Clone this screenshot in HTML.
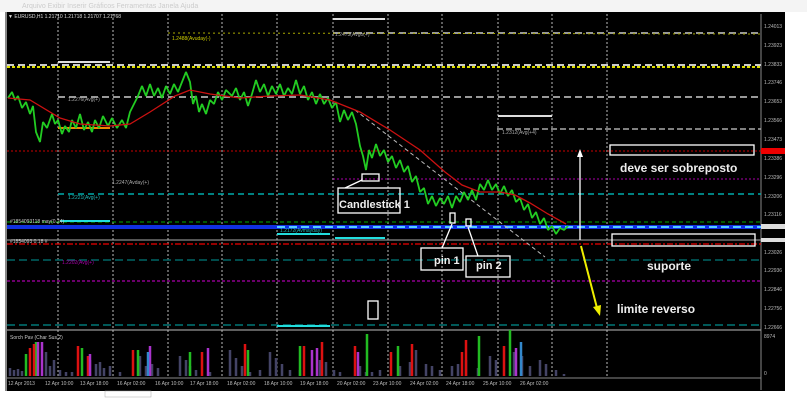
<!DOCTYPE html>
<html><head><meta charset="utf-8"><style>
body{margin:0;width:807px;height:400px;background:#fff;overflow:hidden;font-family:"Liberation Sans",sans-serif}
svg{position:absolute;left:0;top:0}
</style></head><body>
<svg width="807" height="400" viewBox="0 0 807 400" xmlns="http://www.w3.org/2000/svg" font-family="Liberation Sans, sans-serif">
<rect x="0" y="0" width="807" height="12" fill="#f4f4f4"/>
<text x="22" y="8" font-size="7" fill="#ccc">Arquivo  Exibir  Inserir  Gráficos  Ferramentas  Janela  Ajuda</text>
<rect x="5" y="12" width="780" height="380" fill="#000"/>
<rect x="5" y="12" width="2" height="380" fill="#888"/>
<line x1="761" y1="14" x2="761" y2="390" stroke="#888" stroke-width="1"/>
<g font-size="5" fill="#bbb">
<text x="764" y="28">1.24013</text><text x="764" y="47">1.23923</text><text x="764" y="66">1.23833</text><text x="764" y="84">1.23746</text><text x="764" y="103">1.23653</text><text x="764" y="122">1.23566</text><text x="764" y="141">1.23473</text><text x="764" y="160">1.23386</text><text x="764" y="179">1.23296</text><text x="764" y="198">1.23206</text><text x="764" y="216">1.23116</text><text x="764" y="254">1.23026</text><text x="764" y="272">1.22936</text><text x="764" y="291">1.22846</text><text x="764" y="310">1.22756</text><text x="764" y="329">1.22666</text><text x="764" y="338">8974</text><text x="764" y="375">0</text>
</g>
<rect x="761" y="148" width="24" height="6" fill="#e00"/>
<rect x="761" y="224" width="24" height="5" fill="#ddd"/><rect x="761" y="238" width="24" height="4" fill="#ddd"/>
<g stroke="#bbb" stroke-width="1" stroke-dasharray="2,2">
<line x1="58" y1="14" x2="58" y2="378"/><line x1="113" y1="14" x2="113" y2="378"/><line x1="168" y1="14" x2="168" y2="378"/><line x1="222" y1="14" x2="222" y2="378"/><line x1="277" y1="14" x2="277" y2="378"/><line x1="333" y1="14" x2="333" y2="378"/><line x1="388" y1="14" x2="388" y2="378"/><line x1="442" y1="14" x2="442" y2="378"/><line x1="498" y1="14" x2="498" y2="378"/><line x1="552" y1="14" x2="552" y2="378"/><line x1="607" y1="14" x2="607" y2="378"/>
</g>
<line x1="333" y1="33" x2="761" y2="33" stroke="#999" stroke-width="2" stroke-dasharray="7,4"/>
<line x1="168" y1="33" x2="761" y2="34" stroke="#aa0" stroke-width="1" stroke-dasharray="2,3"/>
<line x1="7" y1="65" x2="761" y2="65" stroke="#ccc" stroke-width="2" stroke-dasharray="7,4"/>
<line x1="7" y1="67" x2="761" y2="67" stroke="#dd0" stroke-width="2" stroke-dasharray="3,2"/>
<line x1="58" y1="97" x2="761" y2="97" stroke="#999" stroke-width="2" stroke-dasharray="7,4"/>
<line x1="497" y1="129" x2="761" y2="129" stroke="#aaa" stroke-width="1.5" stroke-dasharray="6,3"/>
<line x1="7" y1="151" x2="761" y2="151" stroke="#c00" stroke-width="1" stroke-dasharray="2,2"/>
<line x1="333" y1="179" x2="761" y2="179" stroke="#a0a" stroke-width="1" stroke-dasharray="2,2"/>
<line x1="58" y1="194" x2="761" y2="194" stroke="#0aa" stroke-width="1.5" stroke-dasharray="6,4"/>
<line x1="7" y1="222" x2="761" y2="222" stroke="#0a0" stroke-width="1" stroke-dasharray="4,3"/>
<rect x="7" y="225" width="754" height="4" fill="#1030e0"/>
<line x1="277" y1="227" x2="761" y2="227" stroke="#5cf" stroke-width="2" stroke-dasharray="8,4"/>
<line x1="7" y1="240" x2="761" y2="240" stroke="#aaa" stroke-width="1"/>
<line x1="7" y1="244" x2="761" y2="244" stroke="#e00" stroke-width="1.2" stroke-dasharray="6,2,2,2"/>
<line x1="7" y1="260" x2="761" y2="260" stroke="#066" stroke-width="1.5" stroke-dasharray="8,4"/>
<line x1="7" y1="281" x2="761" y2="281" stroke="#a0a" stroke-width="1.2" stroke-dasharray="3,2"/>
<line x1="7" y1="325" x2="761" y2="325" stroke="#077" stroke-width="1.5" stroke-dasharray="8,4"/>
<line x1="7" y1="330" x2="761" y2="330" stroke="#bbb" stroke-width="1"/>
<g stroke-width="2">
<line x1="333" y1="19" x2="385" y2="19" stroke="#ddd"/>
<line x1="58" y1="62" x2="110" y2="62" stroke="#ddd"/>
<line x1="498" y1="116" x2="552" y2="116" stroke="#ddd"/>
<line x1="60" y1="221" x2="110" y2="221" stroke="#2dd"/>
<line x1="277" y1="234" x2="330" y2="234" stroke="#2dd"/>
<line x1="335" y1="238" x2="385" y2="238" stroke="#2dd"/>
<line x1="277" y1="326" x2="330" y2="326" stroke="#2dd"/>
<line x1="58" y1="128" x2="110" y2="128" stroke="#e80"/>
</g>
<g font-size="5" fill="#cc0"><text x="172" y="40">1.2488(Avuday(-)</text><text x="335" y="36" fill="#aaa">1.2473(Avgo(+)</text></g>
<g font-size="5" fill="#aaa"><text x="68" y="101">1.2276(Avg(+)</text><text x="502" y="134">1.2312(Avg(+4)</text></g>
<text x="112" y="184" font-size="5" fill="#aaa">1.2247(Avday(+)</text>
<text x="68" y="199" font-size="5" fill="#2bb">1.2221(Avg(+)</text>
<text x="10" y="223" font-size="5" fill="#ccc">#1854093118 may(0.24)</text>
<text x="10" y="243" font-size="5" fill="#ccc">#1854093 0.18 #</text>
<text x="62" y="264" font-size="5" fill="#a0a">1.2202(Avg(+)</text>
<text x="280" y="232" font-size="5" fill="#2bb">1.2172(Avmayday)</text>
<text x="8" y="18" font-size="5" fill="#ddd">▼ EURUSD,H1  1.21710 1.21718 1.21707 1.21768</text>
<line x1="355" y1="110" x2="545" y2="257" stroke="#bbb" stroke-width="1" stroke-dasharray="4,3"/>
<polyline fill="none" stroke="#2c2" stroke-width="1.8" stroke-linejoin="bevel" points="8,98 12,92 15,100 18,96 22,108 26,102 30,114 33,106 36,132 40,142 43,122 47,128 52,114 55,124 58,120 62,134 65,126 69,132 72,120 76,128 80,114 84,130 88,122 92,132 95,120 99,128 103,116 108,126 112,118 117,128 122,120 126,128 130,112 134,104 138,96 142,86 146,96 150,84 154,96 158,88 162,98 166,86 170,94 174,84 178,92 182,82 186,72 190,82 193,104 196,96 199,112 202,104 206,114 210,100 214,104 218,92 222,100 226,90 232,96 236,88 240,100 244,92 248,106 252,94 256,80 260,92 264,84 268,96 272,86 276,94 280,84 284,96 288,88 292,94 296,80 300,94 304,86 308,100 312,92 316,104 320,94 324,104 328,98 332,108 336,102 340,122 344,110 348,120 352,112 356,124 360,146 363,156 366,170 369,150 372,158 376,144 380,156 384,150 388,162 392,156 396,168 400,160 404,172 408,166 412,182 416,176 420,192 424,188 428,204 432,196 436,206 440,198 444,204 448,196 452,208 456,196 460,202 464,192 468,200 472,190 476,200 480,184 484,190 488,180 492,190 496,184 500,194 504,186 508,196 512,190 516,202 520,198 524,210 528,204 532,218 536,212 540,224 544,218 548,230 552,226 556,234 560,228 564,230 568,226"/>
<polyline fill="none" stroke="#c11" stroke-width="1.3" points="8,98 30,100 60,118 80,124 110,126 130,124 150,112 175,96 190,90 210,94 240,98 270,96 300,95 330,100 360,112 390,130 420,150 445,172 462,185 480,192 500,192 515,195 530,203 548,214 566,224"/>
<g fill="none" stroke="#fff" stroke-width="1.3">
<rect x="362" y="174" width="17" height="7"/>
<rect x="338" y="188" width="62" height="25"/>
<rect x="450" y="213" width="5" height="10"/>
<rect x="466" y="219" width="5" height="7"/>
<rect x="421" y="248" width="42" height="22"/>
<rect x="466" y="256" width="44" height="21"/>
<rect x="610" y="145" width="144" height="10"/>
<rect x="612" y="234" width="143" height="12"/>
<rect x="368" y="301" width="10" height="18"/>
<line x1="345" y1="188" x2="362" y2="180"/>
<line x1="442" y1="248" x2="452" y2="224"/>
<line x1="478" y1="256" x2="468" y2="227"/>
<line x1="580" y1="240" x2="580" y2="153"/>
</g>
<polygon points="577,157 580,149 583,157" fill="#fff"/>
<line x1="581" y1="246" x2="597" y2="308" stroke="#ee0" stroke-width="2"/>
<polygon points="593,307 600,316 601,305" fill="#ee0"/>
<g fill="#eee" font-weight="bold">
<text x="339" y="208" font-size="11">Candlestick 1</text>
<text x="434" y="264" font-size="11">pin 1</text>
<text x="476" y="269" font-size="11">pin 2</text>
<text x="620" y="172" font-size="12">deve ser sobreposto</text>
<text x="647" y="270" font-size="12">suporte</text>
<text x="617" y="313" font-size="12">limite reverso</text>
</g>
<text x="10" y="339" font-size="5" fill="#ccc">Sorch Pav (Char Sus 2)</text>
<g stroke-width="2.5">
<path stroke="#446" d="M10 376V368M14 376V370M18 376V369M22 376V371M46 376V352M50 376V366M54 376V360M60 376V370M66 376V372M72 376V372M90 376V360M96 376V364M100 376V362M104 376V368M110 376V366M120 376V372M140 376V356M146 376V366M152 376V364M158 376V368M180 376V356M186 376V360M190 376V366M196 376V370M210 376V372M230 376V350M236 376V358M242 376V366M250 376V372M260 376V370M270 376V352M276 376V358M282 376V364M290 376V370M300 376V370M320 376V360M326 376V362M334 376V370M340 376V372M360 376V366M366 376V372M372 376V372M380 376V370M400 376V366M410 376V362M416 376V350M426 376V364M432 376V366M440 376V370M452 376V366M458 376V364M466 376V360M478 376V368M490 376V356M496 376V360M514 376V352M522 376V356M530 376V366M540 376V360M546 376V364M556 376V370M564 376V374"/>
<path stroke="#2b2" d="M26 376V354M36 376V342M82 376V348M138 376V350M190 376V352M248 376V350M300 376V346M367 376V334M479 376V336M510 376V330M398 376V346"/>
<path stroke="#d11" d="M30 376V348M34 376V344M78 376V346M88 376V356M133 376V350M202 376V352M245 376V344M304 376V346M322 376V342M355 376V346M391 376V352M412 376V344M462 376V352M466 376V340M504 376V346"/>
<path stroke="#a3c" d="M38 376V342M42 376V342M150 376V346M90 376V354M208 376V348M312 376V350M317 376V348M358 376V352M516 376V348"/>
<path stroke="#38c" d="M148 376V352M521 376V342"/>
</g>
<line x1="7" y1="378" x2="761" y2="378" stroke="#888"/>
<g font-size="5" fill="#bbb"><text x="8" y="385">12 Apr 2013</text><text x="45" y="385">12 Apr 10:00</text><text x="80" y="385">13 Apr 18:00</text><text x="117" y="385">16 Apr 02:00</text><text x="155" y="385">16 Apr 10:00</text><text x="190" y="385">17 Apr 18:00</text><text x="227" y="385">18 Apr 02:00</text><text x="264" y="385">18 Apr 10:00</text><text x="300" y="385">19 Apr 18:00</text><text x="337" y="385">20 Apr 02:00</text><text x="373" y="385">23 Apr 10:00</text><text x="410" y="385">24 Apr 02:00</text><text x="446" y="385">24 Apr 18:00</text><text x="483" y="385">25 Apr 10:00</text><text x="520" y="385">26 Apr 02:00</text></g>
<rect x="5" y="391" width="780" height="9" fill="#fff"/>
<rect x="105" y="391" width="46" height="6" fill="#fff" stroke="#aaa" stroke-width="0.5"/>
</svg>
</body></html>
